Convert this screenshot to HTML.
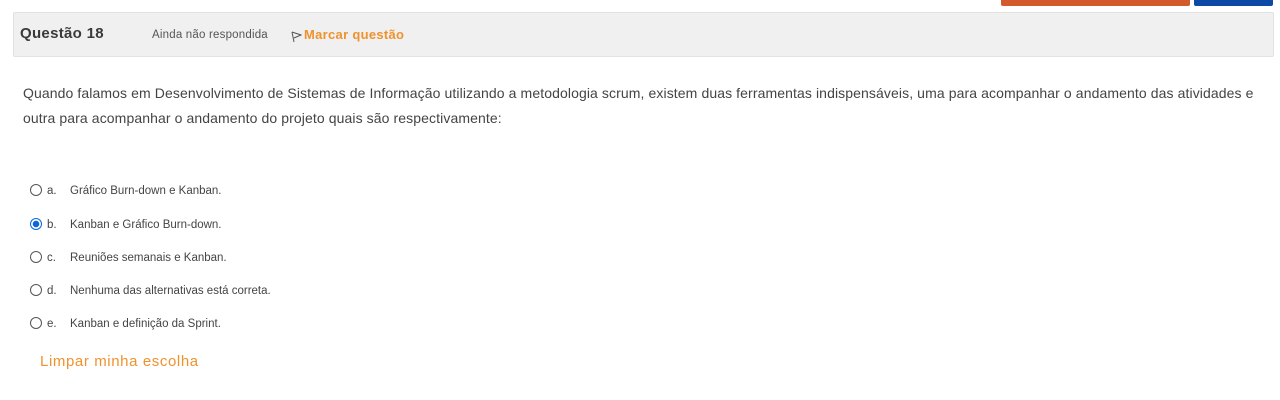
<!DOCTYPE html>
<html><head><meta charset="utf-8"><style>
body{margin:0;width:1280px;height:400px;background:#fff;font-family:"Liberation Sans",sans-serif;color:#373a3c;position:relative;overflow:hidden}
.a{position:absolute}
.hdr{left:13px;top:12px;width:1261px;height:45px;background:#f0f0f0;border:1px solid #e2e2e2;border-radius:2px;box-sizing:border-box}
.opt{position:absolute;left:30px;font-size:11.5px;color:#444;height:16px;line-height:16px;letter-spacing:0}
.r{display:inline-block;width:10px;height:10px;border:1px solid #555;border-radius:50%;vertical-align:-2px;margin-right:5px}
.r.on{border-color:#0a66e0;background:radial-gradient(circle,#0a66e0 0 3px,#fff 3.5px)}
.l{display:inline-block;width:23px}
</style></head><body>
<div class="a" style="left:1001px;top:0;width:189px;height:6px;background:#d35a2c;border-radius:0 0 2px 2px"></div>
<div class="a" style="left:1194px;top:0;width:79px;height:6px;background:#0d4aa6;border-radius:0 0 2px 2px"></div>
<div class="a hdr"></div>
<div class="a" style="left:20px;top:25px;font-size:15px;font-weight:bold;color:#3a3a3a;letter-spacing:0.3px">Questão 18</div>
<div class="a" style="left:152px;top:29px;font-size:11.5px;color:#555;letter-spacing:0.2px">Ainda não respondida</div>
<svg class="a" style="left:290px;top:31px" width="12" height="12" viewBox="0 0 12 12"><path d="M2 1 L4 11 M2 1 L11 4 L4 7" fill="none" stroke="#555" stroke-width="1"/></svg>
<div class="a" style="left:304px;top:27px;font-size:13px;font-weight:bold;color:#f0922c;letter-spacing:0.3px">Marcar questão</div>
<div class="a" style="left:23px;top:81px;width:1250px;font-size:14px;line-height:25px;color:#444;letter-spacing:0.1px">Quando falamos em Desenvolvimento de Sistemas de Informação utilizando a metodologia scrum, existem duas ferramentas indispensáveis, uma para acompanhar o andamento das atividades e outra para acompanhar o andamento do projeto quais são respectivamente:</div>
<div class="opt" style="top:183px"><span class="r"></span><span class="l">a.</span>Gráfico Burn-down e Kanban.</div>
<div class="opt" style="top:217px"><span class="r on"></span><span class="l">b.</span>Kanban e Gráfico Burn-down.</div>
<div class="opt" style="top:250px"><span class="r"></span><span class="l">c.</span>Reuniões semanais e Kanban.</div>
<div class="opt" style="top:283px"><span class="r"></span><span class="l">d.</span>Nenhuma das alternativas está correta.</div>
<div class="opt" style="top:316px"><span class="r"></span><span class="l">e.</span>Kanban e definição da Sprint.</div>
<div class="a" style="left:40px;top:353px;font-size:15px;color:#f0922c;letter-spacing:0.6px">Limpar minha escolha</div>
</body></html>
